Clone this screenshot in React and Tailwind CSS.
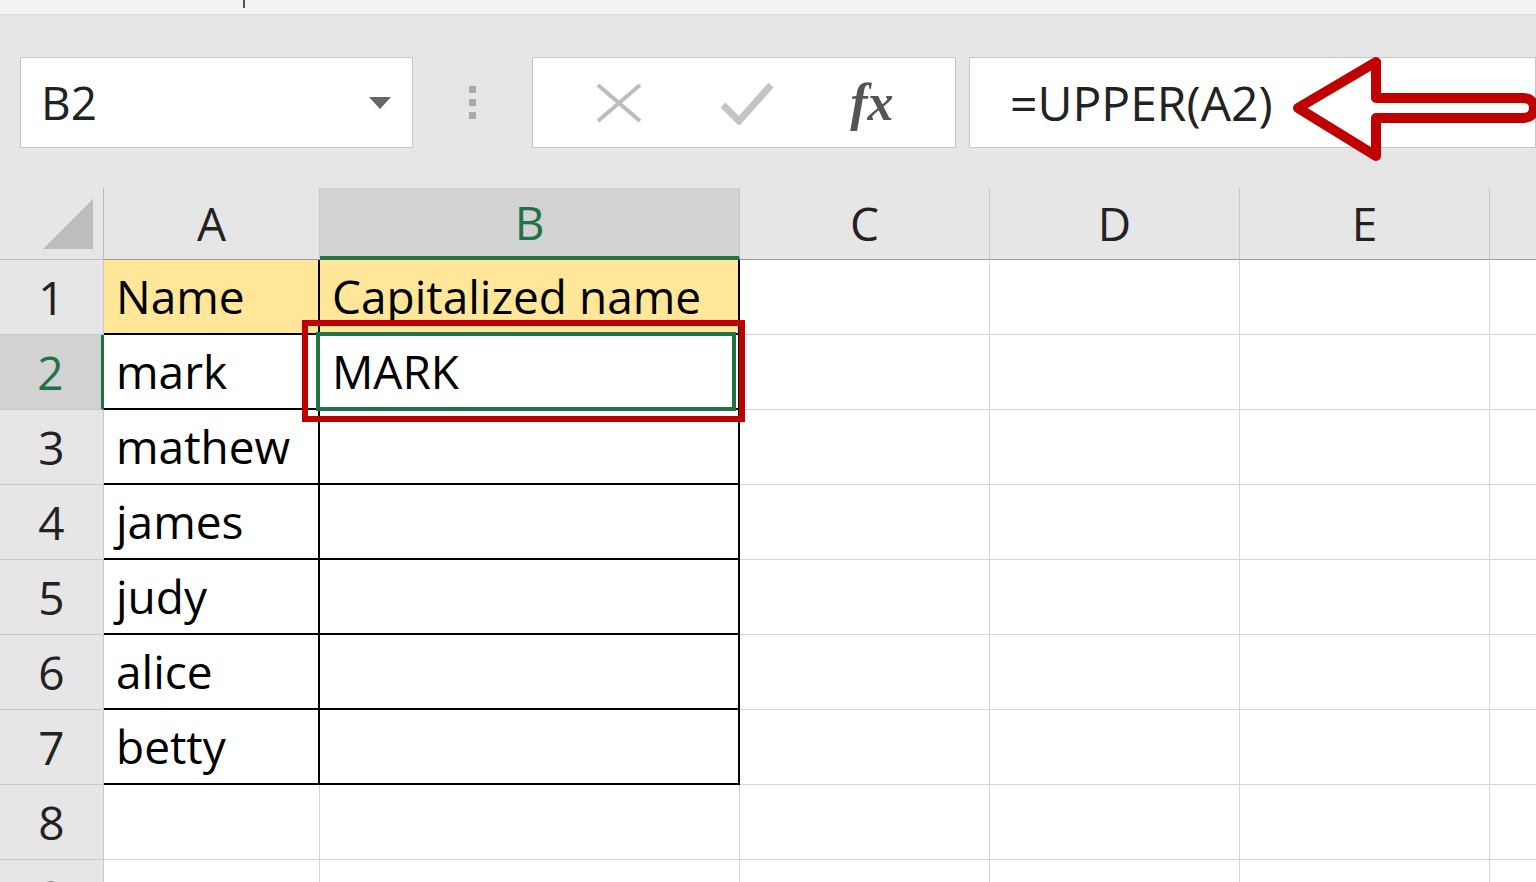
import React from "react";

const COLS = [216, 420, 250, 250, 250, 60];
const NAMES = ["mark", "mathew", "james", "judy", "alice", "betty"];
const F = { fontFamily: '"Open Sans", "Noto Sans", sans-serif' };

function Cell({ className = "", children }) {
  return <div className={`h-[75px] flex items-center px-3 text-[46px] text-black border-r border-b border-[#d4d4d4] overflow-visible whitespace-nowrap ${className}`}>{children}</div>;
}

export default function App() {
  const rows = [1, 2, 3, 4, 5, 6, 7, 8, 9];
  return (
    <div className="relative w-[1536px] h-[882px] overflow-hidden bg-[#e6e6e6]" style={F}>
      <div className="h-[15px] bg-[#f3f3f3] relative border-b border-[#dcdcdc]">
        <div className="absolute left-[243px] top-0 w-[2px] h-[8px] bg-[#555]" />
      </div>
      {/* formula bar */}
      <div className="flex items-start h-[173px] pt-[42px]">
        <div className="ml-[20px] w-[393px] h-[91px] shrink-0 bg-white border border-[#c6c6c6] flex items-center justify-between px-5">
          <span className="text-[46px] text-[#222]">B2</span>
          <svg width="24" height="14" viewBox="0 0 24 14"><path d="M1 1h22L12 13z" fill="#666" /></svg>
        </div>
        <div className="w-[119px] h-[91px] shrink-0 flex flex-col items-center justify-center gap-[6px]">
          <div className="w-[7px] h-[7px] bg-[#aaa]" /><div className="w-[7px] h-[7px] bg-[#aaa]" /><div className="w-[7px] h-[7px] bg-[#aaa]" />
        </div>
        <div className="w-[424px] h-[91px] shrink-0 bg-white border border-[#c6c6c6] flex items-center justify-around px-6">
          <svg width="50" height="44" viewBox="0 0 50 44"><path d="M4 4L46 40M46 4L4 40" stroke="#bdbdbd" strokeWidth="4" /></svg>
          <svg width="56" height="44" viewBox="0 0 56 44"><path d="M4 24L20 40L52 4" stroke="#c4c4c4" strokeWidth="7" fill="none" /></svg>
          <span className="text-[52px] italic font-bold text-[#555]" style={{ fontFamily: '"Liberation Serif", serif' }}>fx</span>
        </div>
        <div className="ml-[13px] flex-1 h-[91px] bg-white border border-[#c6c6c6] flex items-center pl-10">
          <span className="text-[48px] text-[#222]">=UPPER(A2)</span>
        </div>
      </div>
      {/* header */}
      <div className="flex h-[72px]">
        <div className="w-[104px] shrink-0 relative border-r border-b border-[#bcbcbc]">
          <svg className="absolute right-[10px] bottom-[10px]" width="50" height="50" viewBox="0 0 50 50"><path d="M50 0V50H0z" fill="#bdbdbd" /></svg>
        </div>
        {COLS.map((w, i) => (
          <div key={i} style={{ width: w }} className={`shrink-0 flex items-center justify-center text-[46px] border-r border-[#c8c8c8] ${i === 1 ? "bg-[#d2d2d2] text-[#217346] border-b-[4px] border-b-[#217346]" : "text-[#222] border-b border-b-[#9e9e9e]"}`}>
            {i < 5 ? "ABCDE"[i] : ""}
          </div>
        ))}
      </div>
      {rows.map((r) => (
        <div key={r} className="flex">
          <div className={`w-[104px] h-[75px] shrink-0 flex items-center justify-center text-[46px] border-r border-b border-[#c8c8c8] ${r === 2 ? "bg-[#d2d2d2] text-[#217346] border-r-[3px] border-r-[#217346]" : "text-[#222]"}`}>{r}</div>
          {COLS.map((w, i) => {
            let cls = "bg-white";
            let txt = null;
            if (i === 0 && r === 1) { cls = "bg-[#ffe699]"; txt = "Name"; }
            if (i === 1 && r === 1) { cls = "bg-[#ffe699]"; txt = "Capitalized name"; }
            if (i === 0 && r >= 2 && r <= 7) txt = NAMES[r - 2];
            if (i === 1 && r === 2) txt = "MARK";
            const boxed = i <= 1 && r <= 7;
            return (
              <div key={i} style={{ width: w }} className="shrink-0">
                <Cell className={`${cls} ${boxed ? "!border-black border-r-2 border-b-2" : ""}`}>{txt}</Cell>
              </div>
            );
          })}
        </div>
      ))}
      {/* selection + annotation */}
      <div className="absolute left-[316px] top-[332px] w-[420px] h-[79px] border-[4px] border-[#217346]" />
      <div className="absolute left-[302px] top-[320px] w-[443px] h-[102px] border-[6px] border-[#c00000]" />
      <svg className="absolute left-[1290px] top-[56px]" width="246" height="106" viewBox="0 0 246 106">
        <path d="M8 52L86 6V42H232Q244 42 244 52Q244 62 232 62H86V100Z" fill="none" stroke="#c00000" strokeWidth="10" strokeLinejoin="round" />
      </svg>
    </div>
  );
}
